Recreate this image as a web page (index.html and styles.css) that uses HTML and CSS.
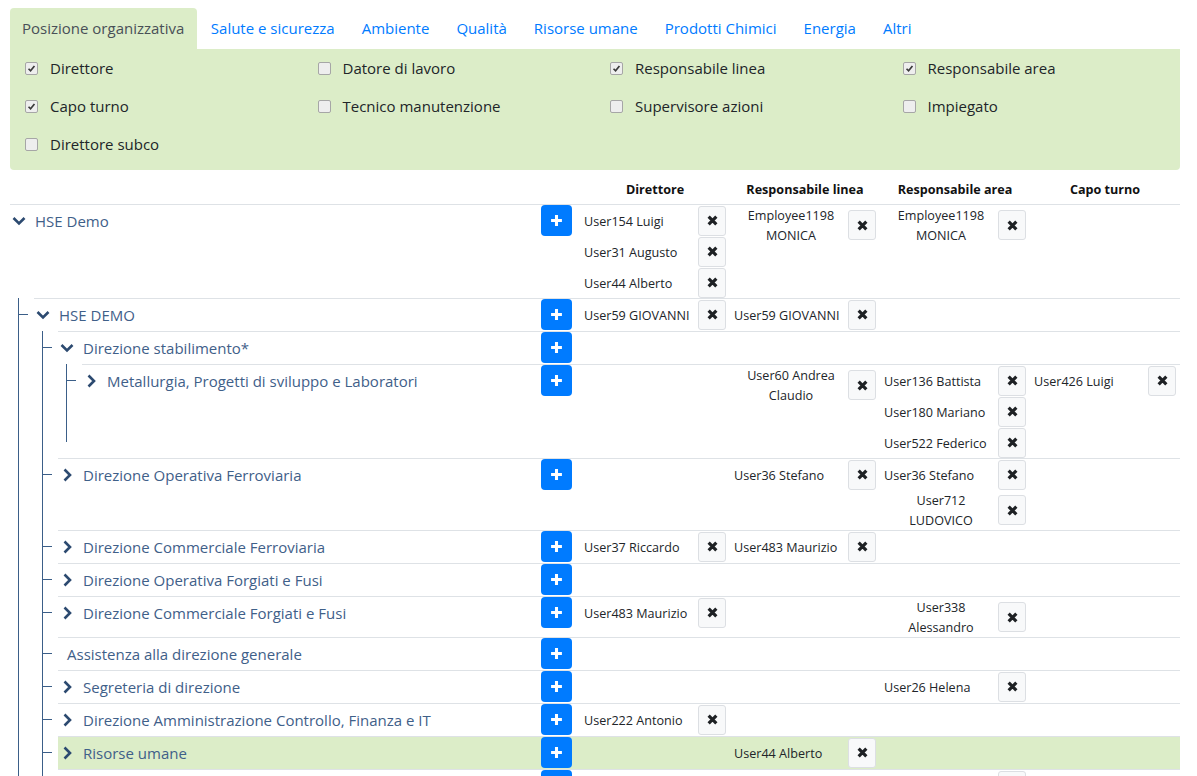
FILE: index.html
```html
<!DOCTYPE html>
<html lang="it">
<head>
<meta charset="utf-8">
<title>Posizione organizzativa</title>
<link rel="stylesheet" href="styles.css">
</head>
<body>
<div class="page">
  <ul class="tabs">
    <li class="tab active">Posizione organizzativa</li>
    <li class="tab">Salute e sicurezza</li>
    <li class="tab">Ambiente</li>
    <li class="tab">Qualità</li>
    <li class="tab">Risorse umane</li>
    <li class="tab">Prodotti Chimici</li>
    <li class="tab">Energia</li>
    <li class="tab">Altri</li>
  </ul>
  <div class="panel">
    <div class="roles">
      <label class="role"><span class="cb on"><svg viewBox="0 0 13 13"><path d="M3 6.8 L5.4 9.2 L10 3.6"/></svg></span>Direttore</label>
      <label class="role"><span class="cb"></span>Datore di lavoro</label>
      <label class="role"><span class="cb on"><svg viewBox="0 0 13 13"><path d="M3 6.8 L5.4 9.2 L10 3.6"/></svg></span>Responsabile linea</label>
      <label class="role"><span class="cb on"><svg viewBox="0 0 13 13"><path d="M3 6.8 L5.4 9.2 L10 3.6"/></svg></span>Responsabile area</label>
      <label class="role"><span class="cb on"><svg viewBox="0 0 13 13"><path d="M3 6.8 L5.4 9.2 L10 3.6"/></svg></span>Capo turno</label>
      <label class="role"><span class="cb"></span>Tecnico manutenzione</label>
      <label class="role"><span class="cb"></span>Supervisore azioni</label>
      <label class="role"><span class="cb"></span>Impiegato</label>
      <label class="role"><span class="cb"></span>Direttore subco</label>
    </div>
  </div>

  <div class="thead">
    <div class="spacer"></div>
    <div class="cols">
      <div class="th">Direttore</div>
      <div class="th">Responsabile linea</div>
      <div class="th">Responsabile area</div>
      <div class="th">Capo turno</div>
    </div>
  </div>

  <ul class="tree">
    <li>
      <div class="row">
        <div class="name"><svg class="chev" viewBox="0 0 14 14"><path d="M1.5 4 L7 9.5 L12.5 4"/></svg><span class="label">HSE Demo</span></div>
        <div class="add"><svg viewBox="0 0 12 12"><path d="M6 1 V11 M1 6 H11"/></svg></div>
        <div class="cols">
          <div class="cell">
            <div class="entry"><span class="who">User154 Luigi</span><span class="x"><svg viewBox="0 0 10 10"><path d="M1.5 1.5 L8.5 8.5 M8.5 1.5 L1.5 8.5"/></svg></span></div>
            <div class="entry"><span class="who">User31 Augusto</span><span class="x"><svg viewBox="0 0 10 10"><path d="M1.5 1.5 L8.5 8.5 M8.5 1.5 L1.5 8.5"/></svg></span></div>
            <div class="entry"><span class="who">User44 Alberto</span><span class="x"><svg viewBox="0 0 10 10"><path d="M1.5 1.5 L8.5 8.5 M8.5 1.5 L1.5 8.5"/></svg></span></div>
          </div>
          <div class="cell">
            <div class="entry wrap"><span class="who">Employee1198<br>MONICA</span><span class="x"><svg viewBox="0 0 10 10"><path d="M1.5 1.5 L8.5 8.5 M8.5 1.5 L1.5 8.5"/></svg></span></div>
          </div>
          <div class="cell">
            <div class="entry wrap"><span class="who">Employee1198<br>MONICA</span><span class="x"><svg viewBox="0 0 10 10"><path d="M1.5 1.5 L8.5 8.5 M8.5 1.5 L1.5 8.5"/></svg></span></div>
          </div>
          <div class="cell"></div>
        </div>
      </div>
      <ul class="children">
        <li>
          <div class="row">
            <div class="name"><svg class="chev" viewBox="0 0 14 14"><path d="M1.5 4 L7 9.5 L12.5 4"/></svg><span class="label">HSE DEMO</span></div>
            <div class="add"><svg viewBox="0 0 12 12"><path d="M6 1 V11 M1 6 H11"/></svg></div>
            <div class="cols">
              <div class="cell">
                <div class="entry"><span class="who">User59 GIOVANNI</span><span class="x"><svg viewBox="0 0 10 10"><path d="M1.5 1.5 L8.5 8.5 M8.5 1.5 L1.5 8.5"/></svg></span></div>
              </div>
              <div class="cell">
                <div class="entry"><span class="who">User59 GIOVANNI</span><span class="x"><svg viewBox="0 0 10 10"><path d="M1.5 1.5 L8.5 8.5 M8.5 1.5 L1.5 8.5"/></svg></span></div>
              </div>
              <div class="cell"></div>
              <div class="cell"></div>
            </div>
          </div>
          <ul class="children">
            <li>
              <div class="row">
                <div class="name"><svg class="chev" viewBox="0 0 14 14"><path d="M1.5 4 L7 9.5 L12.5 4"/></svg><span class="label">Direzione stabilimento*</span></div>
                <div class="add"><svg viewBox="0 0 12 12"><path d="M6 1 V11 M1 6 H11"/></svg></div>
                <div class="cols">
                  <div class="cell"></div><div class="cell"></div><div class="cell"></div><div class="cell"></div>
                </div>
              </div>
              <ul class="children short">
                <li>
                  <div class="row">
                    <div class="name"><svg class="chev" viewBox="0 0 14 14"><path d="M4.5 1.5 L10 7 L4.5 12.5"/></svg><span class="label">Metallurgia, Progetti di sviluppo e Laboratori</span></div>
                    <div class="add"><svg viewBox="0 0 12 12"><path d="M6 1 V11 M1 6 H11"/></svg></div>
                    <div class="cols">
                      <div class="cell"></div>
                      <div class="cell">
                        <div class="entry wrap"><span class="who">User60 Andrea<br>Claudio</span><span class="x"><svg viewBox="0 0 10 10"><path d="M1.5 1.5 L8.5 8.5 M8.5 1.5 L1.5 8.5"/></svg></span></div>
                      </div>
                      <div class="cell">
                        <div class="entry"><span class="who">User136 Battista</span><span class="x"><svg viewBox="0 0 10 10"><path d="M1.5 1.5 L8.5 8.5 M8.5 1.5 L1.5 8.5"/></svg></span></div>
                        <div class="entry"><span class="who">User180 Mariano</span><span class="x"><svg viewBox="0 0 10 10"><path d="M1.5 1.5 L8.5 8.5 M8.5 1.5 L1.5 8.5"/></svg></span></div>
                        <div class="entry"><span class="who">User522 Federico</span><span class="x"><svg viewBox="0 0 10 10"><path d="M1.5 1.5 L8.5 8.5 M8.5 1.5 L1.5 8.5"/></svg></span></div>
                      </div>
                      <div class="cell">
                        <div class="entry"><span class="who">User426 Luigi</span><span class="x"><svg viewBox="0 0 10 10"><path d="M1.5 1.5 L8.5 8.5 M8.5 1.5 L1.5 8.5"/></svg></span></div>
                      </div>
                    </div>
                  </div>
                </li>
              </ul>
            </li>
            <li>
              <div class="row">
                <div class="name"><svg class="chev" viewBox="0 0 14 14"><path d="M4.5 1.5 L10 7 L4.5 12.5"/></svg><span class="label">Direzione Operativa Ferroviaria</span></div>
                <div class="add"><svg viewBox="0 0 12 12"><path d="M6 1 V11 M1 6 H11"/></svg></div>
                <div class="cols">
                  <div class="cell"></div>
                  <div class="cell">
                    <div class="entry"><span class="who">User36 Stefano</span><span class="x"><svg viewBox="0 0 10 10"><path d="M1.5 1.5 L8.5 8.5 M8.5 1.5 L1.5 8.5"/></svg></span></div>
                  </div>
                  <div class="cell">
                    <div class="entry"><span class="who">User36 Stefano</span><span class="x"><svg viewBox="0 0 10 10"><path d="M1.5 1.5 L8.5 8.5 M8.5 1.5 L1.5 8.5"/></svg></span></div>
                    <div class="entry wrap"><span class="who">User712<br>LUDOVICO</span><span class="x"><svg viewBox="0 0 10 10"><path d="M1.5 1.5 L8.5 8.5 M8.5 1.5 L1.5 8.5"/></svg></span></div>
                  </div>
                  <div class="cell"></div>
                </div>
              </div>
            </li>
            <li>
              <div class="row">
                <div class="name"><svg class="chev" viewBox="0 0 14 14"><path d="M4.5 1.5 L10 7 L4.5 12.5"/></svg><span class="label">Direzione Commerciale Ferroviaria</span></div>
                <div class="add"><svg viewBox="0 0 12 12"><path d="M6 1 V11 M1 6 H11"/></svg></div>
                <div class="cols">
                  <div class="cell">
                    <div class="entry"><span class="who">User37 Riccardo</span><span class="x"><svg viewBox="0 0 10 10"><path d="M1.5 1.5 L8.5 8.5 M8.5 1.5 L1.5 8.5"/></svg></span></div>
                  </div>
                  <div class="cell">
                    <div class="entry"><span class="who">User483 Maurizio</span><span class="x"><svg viewBox="0 0 10 10"><path d="M1.5 1.5 L8.5 8.5 M8.5 1.5 L1.5 8.5"/></svg></span></div>
                  </div>
                  <div class="cell"></div><div class="cell"></div>
                </div>
              </div>
            </li>
            <li>
              <div class="row">
                <div class="name"><svg class="chev" viewBox="0 0 14 14"><path d="M4.5 1.5 L10 7 L4.5 12.5"/></svg><span class="label">Direzione Operativa Forgiati e Fusi</span></div>
                <div class="add"><svg viewBox="0 0 12 12"><path d="M6 1 V11 M1 6 H11"/></svg></div>
                <div class="cols">
                  <div class="cell"></div><div class="cell"></div><div class="cell"></div><div class="cell"></div>
                </div>
              </div>
            </li>
            <li>
              <div class="row">
                <div class="name"><svg class="chev" viewBox="0 0 14 14"><path d="M4.5 1.5 L10 7 L4.5 12.5"/></svg><span class="label">Direzione Commerciale Forgiati e Fusi</span></div>
                <div class="add"><svg viewBox="0 0 12 12"><path d="M6 1 V11 M1 6 H11"/></svg></div>
                <div class="cols">
                  <div class="cell">
                    <div class="entry"><span class="who">User483 Maurizio</span><span class="x"><svg viewBox="0 0 10 10"><path d="M1.5 1.5 L8.5 8.5 M8.5 1.5 L1.5 8.5"/></svg></span></div>
                  </div>
                  <div class="cell"></div>
                  <div class="cell">
                    <div class="entry wrap"><span class="who">User338<br>Alessandro</span><span class="x"><svg viewBox="0 0 10 10"><path d="M1.5 1.5 L8.5 8.5 M8.5 1.5 L1.5 8.5"/></svg></span></div>
                  </div>
                  <div class="cell"></div>
                </div>
              </div>
            </li>
            <li>
              <div class="row">
                <div class="name leaf"><span class="label">Assistenza alla direzione generale</span></div>
                <div class="add"><svg viewBox="0 0 12 12"><path d="M6 1 V11 M1 6 H11"/></svg></div>
                <div class="cols">
                  <div class="cell"></div><div class="cell"></div><div class="cell"></div><div class="cell"></div>
                </div>
              </div>
            </li>
            <li>
              <div class="row">
                <div class="name"><svg class="chev" viewBox="0 0 14 14"><path d="M4.5 1.5 L10 7 L4.5 12.5"/></svg><span class="label">Segreteria di direzione</span></div>
                <div class="add"><svg viewBox="0 0 12 12"><path d="M6 1 V11 M1 6 H11"/></svg></div>
                <div class="cols">
                  <div class="cell"></div><div class="cell"></div>
                  <div class="cell">
                    <div class="entry"><span class="who">User26 Helena</span><span class="x"><svg viewBox="0 0 10 10"><path d="M1.5 1.5 L8.5 8.5 M8.5 1.5 L1.5 8.5"/></svg></span></div>
                  </div>
                  <div class="cell"></div>
                </div>
              </div>
            </li>
            <li>
              <div class="row">
                <div class="name"><svg class="chev" viewBox="0 0 14 14"><path d="M4.5 1.5 L10 7 L4.5 12.5"/></svg><span class="label">Direzione Amministrazione Controllo, Finanza e IT</span></div>
                <div class="add"><svg viewBox="0 0 12 12"><path d="M6 1 V11 M1 6 H11"/></svg></div>
                <div class="cols">
                  <div class="cell">
                    <div class="entry"><span class="who">User222 Antonio</span><span class="x"><svg viewBox="0 0 10 10"><path d="M1.5 1.5 L8.5 8.5 M8.5 1.5 L1.5 8.5"/></svg></span></div>
                  </div>
                  <div class="cell"></div><div class="cell"></div><div class="cell"></div>
                </div>
              </div>
            </li>
            <li>
              <div class="row selected">
                <div class="name"><svg class="chev" viewBox="0 0 14 14"><path d="M4.5 1.5 L10 7 L4.5 12.5"/></svg><span class="label">Risorse umane</span></div>
                <div class="add"><svg viewBox="0 0 12 12"><path d="M6 1 V11 M1 6 H11"/></svg></div>
                <div class="cols">
                  <div class="cell"></div>
                  <div class="cell">
                    <div class="entry"><span class="who">User44 Alberto</span><span class="x"><svg viewBox="0 0 10 10"><path d="M1.5 1.5 L8.5 8.5 M8.5 1.5 L1.5 8.5"/></svg></span></div>
                  </div>
                  <div class="cell"></div><div class="cell"></div>
                </div>
              </div>
            </li>
            <li>
              <div class="row">
                <div class="name"><svg class="chev" viewBox="0 0 14 14"><path d="M4.5 1.5 L10 7 L4.5 12.5"/></svg><span class="label">&nbsp;</span></div>
                <div class="add"><svg viewBox="0 0 12 12"><path d="M6 1 V11 M1 6 H11"/></svg></div>
                <div class="cols">
                  <div class="cell"></div><div class="cell"></div>
                  <div class="cell">
                    <div class="entry"><span class="who">&nbsp;</span><span class="x"><svg viewBox="0 0 10 10"><path d="M1.5 1.5 L8.5 8.5 M8.5 1.5 L1.5 8.5"/></svg></span></div>
                  </div>
                  <div class="cell"></div>
                </div>
              </div>
            </li>
          </ul>
        </li>
      </ul>
    </li>
  </ul>
</div>
</body>
</html>
```

FILE: styles.css
```css
* { box-sizing: border-box; }

html, body {
  margin: 0;
  padding: 0;
  background: #ffffff;
}

body {
  font-family: "Open Sans", "Noto Sans", sans-serif;
  font-size: 15px;
  color: #212529;
}

.page {
  padding: 8px 17px 0 10px;
}

/* Tabs */
.tabs {
  display: flex;
  list-style: none;
  margin: 0;
  padding: 0;
  height: 41px;
}

.tab {
  padding: 0 13.5px;
  line-height: 41px;
  color: #007bff;
  font-size: 15px;
  white-space: nowrap;
}

.tab.active {
  background: #dcedc8;
  color: #495057;
  border-radius: 4px 4px 0 0;
  padding: 0 13px 0 12px;
}

/* Role panel */
.panel {
  background: #dcedc8;
  border-radius: 0 0 4px 4px;
  padding-bottom: 7px;
}

.roles {
  display: grid;
  grid-template-columns: repeat(4, 1fr);
}

.role {
  display: flex;
  align-items: center;
  height: 38px;
  padding-left: 15px;
  font-size: 15px;
  color: #212529;
  white-space: nowrap;
}

.cb {
  width: 13px;
  height: 13px;
  margin-right: 12px;
  border: 1px solid #a6a6a6;
  border-radius: 2px;
  background: #eeeeee;
  display: flex;
  flex: none;
}

.cb svg {
  width: 11px;
  height: 11px;
  fill: none;
  stroke: #3a3a3a;
  stroke-width: 2;
}

/* Table header */
.thead {
  display: flex;
  margin-top: 5px;
  height: 29px;
  align-items: center;
}

.spacer {
  flex: 1;
}

.thead .cols {
  margin-left: 39px;
}

.th {
  width: 150px;
  text-align: center;
  font-weight: 700;
  font-size: 12.6px;
  color: #111;
  white-space: nowrap;
}

/* Tree */
.tree,
.children {
  list-style: none;
  margin: 0;
  padding: 0;
}

.children {
  position: relative;
  padding-left: 24px;
}

.children::before {
  content: "";
  position: absolute;
  left: 8px;
  top: 0;
  bottom: 0;
  border-left: 1px solid #3b5e88;
}

.children.short::before {
  bottom: 16px;
}

.children > li {
  position: relative;
}

.children > li::before {
  content: "";
  position: absolute;
  left: -16px;
  top: 16px;
  width: 10px;
  border-top: 1px solid #3b5e88;
}

.row {
  display: flex;
  align-items: flex-start;
  border-top: 1px solid #dee2e6;
  min-height: 33px;
}

.row.selected {
  background: #dcedc8;
}

.name {
  flex: 1;
  display: flex;
  align-items: center;
  height: 32px;
  padding-left: 2px;
  color: #3f6089;
  font-size: 15px;
  white-space: nowrap;
  min-width: 0;
}

.name.leaf {
  padding-left: 9px;
}

.chev {
  width: 14px;
  height: 14px;
  flex: none;
  margin-right: 9px;
  fill: none;
  stroke: #2c4a70;
  stroke-width: 2.6;
}

.add {
  width: 31px;
  height: 31px;
  flex: none;
  background: #007bff;
  border-radius: 4px;
  display: flex;
  align-items: center;
  justify-content: center;
}

.add svg {
  width: 13px;
  height: 13px;
  fill: none;
  stroke: #ffffff;
  stroke-width: 2.8;
}

.cols {
  display: flex;
  flex: none;
  margin-left: 8px;
}

.cell {
  width: 150px;
  padding: 0 4px;
}

.entry {
  display: flex;
  align-items: center;
  min-height: 31px;
}

.who {
  font-size: 12.6px;
  line-height: 20px;
  color: #212529;
  white-space: nowrap;
  padding-top: 1px;
  margin-bottom: -1px;
}

.entry.wrap .who {
  flex: 1;
  text-align: center;
}

.x {
  width: 28px;
  height: 30px;
  margin-left: auto;
  flex: none;
  border: 1px solid #dcdfe3;
  border-radius: 3px;
  background: #f8f9fa;
  display: flex;
  align-items: center;
  justify-content: center;
}

.x svg {
  width: 11px;
  height: 11px;
  fill: none;
  stroke: #1e2124;
  stroke-width: 2.9;
}
```
